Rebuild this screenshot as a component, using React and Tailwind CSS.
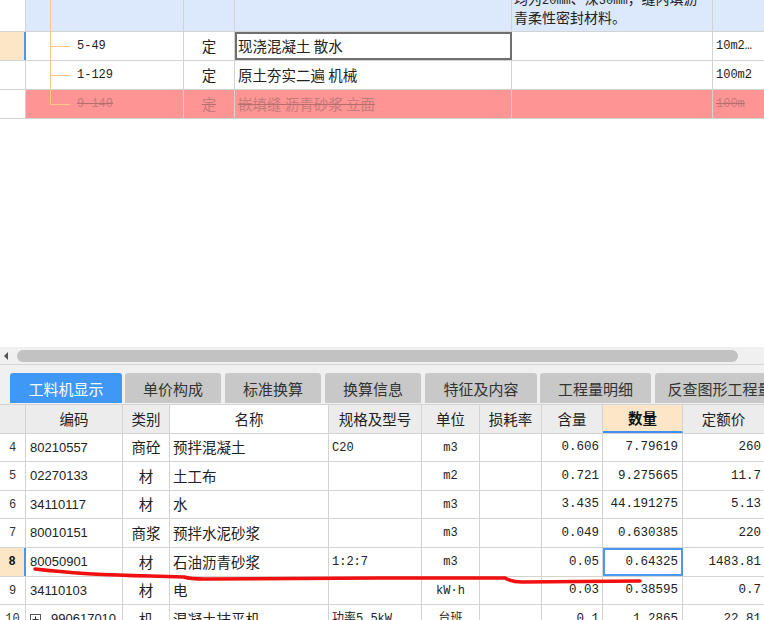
import React from 'react';

const cjk = "font-['Noto_Sans_CJK_SC',sans-serif]";
const mono = "font-['Liberation_Mono','Noto_Sans_CJK_SC',monospace]";
const sans = "font-['Liberation_Sans','Noto_Sans_CJK_SC',sans-serif]";
const line = 'border-[#d3d3d3]';

const Tree = ({ last }) => (
  <>
    <span className={`absolute left-[24px] top-0 w-px bg-[#fbc985] ${last ? 'h-1/2' : 'h-full'}`} />
    <span className="absolute left-[24px] top-1/2 h-px w-[20px] bg-[#fbc985]" />
  </>
);

const TopRow = ({ code, name, unit, selected, dead, last }) => {
  const bg = dead ? 'bg-[#ff9494]' : 'bg-white';
  const txt = dead ? 'text-[#c47b7b] line-through decoration-[#b86d6d]' : 'text-[#222]';
  return (
    <div className={`flex h-[29px] border-b ${line}`}>
      <div
        className={`w-[26px] shrink-0 ${
          selected ? 'bg-[#fde6c6] border-r-2 border-r-[#4b97f0]' : `bg-white border-r ${line}`
        }`}
      />
      <div className={`relative flex w-[158px] shrink-0 items-center border-r ${line} ${bg}`}>
        <Tree last={last} />
        <span className={`${mono} pl-[51px] text-[12px] ${txt}`}>{code}</span>
      </div>
      <div className={`flex w-[51px] shrink-0 items-center justify-center border-r ${line} ${bg}`}>
        <span className={`${cjk} text-[14.5px] leading-none ${txt}`}>定</span>
      </div>
      <div
        className={`flex w-[277px] shrink-0 items-center border-r ${line} ${bg} pl-[3px] ${
          selected ? 'outline-2 -outline-offset-2 outline-[#6f6f6f]' : ''
        }`}
      >
        <span className={`${cjk} whitespace-pre text-[14.5px] leading-none ${txt}`}>{name}</span>
      </div>
      <div className={`w-[201px] shrink-0 border-r ${line} ${bg}`} />
      <div className={`flex w-[51px] shrink-0 items-center overflow-hidden pl-[3px] ${bg}`}>
        <span className={`${mono} whitespace-nowrap text-[12px] ${txt}`}>{unit}</span>
      </div>
    </div>
  );
};

const widths = [
  'w-[26px]',
  'w-[97px]',
  'w-[47px]',
  'w-[159px]',
  'w-[93px]',
  'w-[58px]',
  'w-[62px]',
  'w-[61px]',
  'w-[80px]',
  'w-[81px]',
];

const rows = [
  { h: 'h-[28px]', n: '4', code: '80210557', type: '商砼', name: '预拌混凝土', spec: 'C20', unit: 'm3', qty: '0.606', amt: '7.79619', price: '260' },
  { h: 'h-[29px]', n: '5', code: '02270133', type: '材', name: '土工布', spec: '', unit: 'm2', qty: '0.721', amt: '9.275665', price: '11.7' },
  { h: 'h-[28px]', n: '6', code: '34110117', type: '材', name: '水', spec: '', unit: 'm3', qty: '3.435', amt: '44.191275', price: '5.13' },
  { h: 'h-[29px]', n: '7', code: '80010151', type: '商浆', name: '预拌水泥砂浆', spec: '', unit: 'm3', qty: '0.049', amt: '0.630385', price: '220' },
  { h: 'h-[29px]', n: '8', code: '80050901', type: '材', name: '石油沥青砂浆', spec: '1:2:7', unit: 'm3', qty: '0.05', amt: '0.64325', price: '1483.81', sel: true },
  { h: 'h-[28px]', n: '9', code: '34110103', type: '材', name: '电', spec: '', unit: 'kW·h', qty: '0.03', amt: '0.38595', price: '0.7' },
  { h: 'h-[29px]', n: '10', code: '990617010', type: '机', name: '混凝土抹平机', spec: '功率5.5kW', unit: '台班', qty: '0.1', amt: '1.2865', price: '22.81', plus: true },
];

const tabs = [
  { label: '工料机显示', w: 'w-[112px]', ml: 'ml-[10px]', active: true },
  { label: '单价构成', w: 'w-[96px]', ml: 'ml-[3px]' },
  { label: '标准换算', w: 'w-[96px]', ml: 'ml-[4px]' },
  { label: '换算信息', w: 'w-[96px]', ml: 'ml-[4px]' },
  { label: '特征及内容', w: 'w-[112px]', ml: 'ml-[4px]' },
  { label: '工程量明细', w: 'w-[111px]', ml: 'ml-[3px]' },
  { label: '反查图形工程量', w: 'w-[130px]', ml: 'ml-[4px]' },
];

const headers = ['', '编码', '类别', '名称', '规格及型号', '单位', '损耗率', '含量', '数量', '定额价'];

const Num = ({ children }) => <span className={`${mono} text-[12px]`}>{children}</span>;

export default function App() {
  return (
    <div className="relative h-[620px] w-[764px] overflow-hidden bg-white">
      {/* upper list */}
      <div className="flex flex-col">
        <div className={`flex h-[32px] border-b ${line}`}>
          <div className={`w-[26px] shrink-0 border-r ${line} bg-white`} />
          <div className={`relative w-[158px] shrink-0 border-r ${line} bg-[#dce8fb]`}>
            <span className="absolute left-[24px] top-0 h-full w-px bg-[#fbc985]" />
          </div>
          <div className={`w-[51px] shrink-0 border-r ${line} bg-[#dce8fb]`} />
          <div className={`w-[277px] shrink-0 border-r ${line} bg-[#dce8fb]`} />
          <div className={`flex w-[201px] shrink-0 flex-col justify-end overflow-hidden border-r ${line} bg-[#dce8fb] pb-[6px] pl-[2px]`}>
            <div className={`${cjk} whitespace-nowrap text-[14px] leading-[16px] text-[#222]`}>
              均为<Num>20mm</Num>、深<Num>30mm</Num>，缝内填沥
            </div>
            <div className={`${cjk} whitespace-nowrap text-[14px] leading-[16px] text-[#222]`}>青柔性密封材料。</div>
          </div>
          <div className="w-[51px] shrink-0 bg-[#dce8fb]" />
        </div>
        <TopRow code="5-49" name="现浇混凝土 散水" unit="10m2…" selected />
        <TopRow code="1-129" name="原土夯实二遍 机械" unit="100m2" />
        <TopRow code="9-140" name="嵌填缝 沥青砂浆 立面" unit="100m" dead last />
      </div>

      <div className="h-[228px]" />

      {/* horizontal scrollbar */}
      <div className="flex h-[18px] items-center border-b border-[#d6d6d6] bg-[#f0f0f0]">
        <svg width="17" height="18" viewBox="0 0 17 18" className="shrink-0">
          <polygon points="8,5 8,13 4,9" fill="#555" />
        </svg>
        <div className="h-[12px] w-[721px] rounded-full bg-[#c2c2c2]" />
      </div>

      {/* tabs */}
      <div className="flex h-[39px] items-start overflow-hidden bg-[#f0f0f0] pt-[8px]">
        {tabs.map((t) => (
          <div
            key={t.label}
            className={`${t.w} ${t.ml} flex h-[30px] shrink-0 items-center justify-center rounded-t-[3px] ${
              t.active ? 'bg-[#3f97f6] text-white' : 'bg-[#c8c8c8] text-[#333]'
            }`}
          >
            <span className={`${cjk} whitespace-nowrap text-[15px] leading-none`}>{t.label}</span>
          </div>
        ))}
      </div>

      {/* lower grid */}
      <div className={`flex h-[30px] border-y ${line}`}>
        {headers.map((h, i) => (
          <div
            key={i}
            className={`${widths[i]} flex shrink-0 items-center justify-center ${i < 9 ? `border-r ${line}` : ''} ${
              i === 3 ? 'bg-white' : i === 8 ? 'bg-[#fde6c8] border-b-2 border-b-[#3f8ff0]' : 'bg-[#ececec]'
            }`}
          >
            <span className={`${cjk} text-[14.5px] leading-none ${i === 8 ? 'font-bold text-[#111]' : 'text-[#222]'}`}>{h}</span>
          </div>
        ))}
      </div>
      {rows.map((r) => (
        <div key={r.n} className={`flex ${r.h} border-b ${line}`}>
          <div
            className={`${widths[0]} flex shrink-0 items-center justify-center ${
              r.sel ? 'bg-[#fde6c6] border-r-2 border-r-[#4b97f0]' : `bg-white border-r ${line}`
            }`}
          >
            <span className={`${mono} text-[12px] ${r.sel ? 'font-bold text-[#111]' : 'text-[#333]'}`}>{r.n}</span>
          </div>
          <div className={`${widths[1]} flex shrink-0 items-center gap-[10px] border-r ${line} pl-[4px]`}>
            {r.plus && (
              <span className="flex h-[11px] w-[11px] shrink-0 items-center justify-center border border-[#555]">
                <svg width="9" height="9" viewBox="0 0 9 9">
                  <path d="M4.5 1.5v6M1.5 4.5h6" stroke="#333" strokeWidth="1" />
                </svg>
              </span>
            )}
            <span className={`${sans} text-[13px] text-[#222]`}>{r.code}</span>
          </div>
          <div className={`${widths[2]} flex shrink-0 items-center justify-center border-r ${line}`}>
            <span className={`${cjk} text-[14.5px] leading-none text-[#222]`}>{r.type}</span>
          </div>
          <div className={`${widths[3]} flex shrink-0 items-center border-r ${line} pl-[3px]`}>
            <span className={`${cjk} text-[14.5px] leading-none text-[#222]`}>{r.name}</span>
          </div>
          <div className={`${widths[4]} flex shrink-0 items-center overflow-hidden border-r ${line} pl-[3px]`}>
            <span className={`${mono} whitespace-nowrap text-[12px] text-[#222]`}>{r.spec}</span>
          </div>
          <div className={`${widths[5]} flex shrink-0 items-center justify-center border-r ${line}`}>
            <span className={`${mono} whitespace-nowrap text-[12px] text-[#222]`}>{r.unit}</span>
          </div>
          <div className={`${widths[6]} shrink-0 border-r ${line}`} />
          <div className={`${widths[7]} flex shrink-0 items-center justify-end border-r ${line} pr-[3px]`}>
            <span className={`${mono} text-[12.5px] text-[#222]`}>{r.qty}</span>
          </div>
          <div
            className={`${widths[8]} flex shrink-0 items-center justify-end border-r ${line} pr-[4px] ${
              r.sel ? 'outline-2 -outline-offset-2 outline-[#4a9af5]' : ''
            }`}
          >
            <span className={`${mono} text-[12.5px] text-[#222]`}>{r.amt}</span>
          </div>
          <div className={`${widths[9]} flex shrink-0 items-center justify-end pr-[3px]`}>
            <span className={`${mono} text-[12.5px] text-[#222]`}>{r.price}</span>
          </div>
        </div>
      ))}

      {/* red hand-drawn mark */}
      <svg className="pointer-events-none absolute left-0 top-0" width="764" height="620">
        <path
          d="M35 569 C60 572 95 575 150 576 L184 577 C190 579 196 579 205 579 L380 578 L505 578 C510 581 515 582 522 582 L640 581"
          fill="none"
          stroke="#f01010"
          strokeWidth="3.5"
          strokeLinecap="round"
        />
      </svg>
    </div>
  );
}
